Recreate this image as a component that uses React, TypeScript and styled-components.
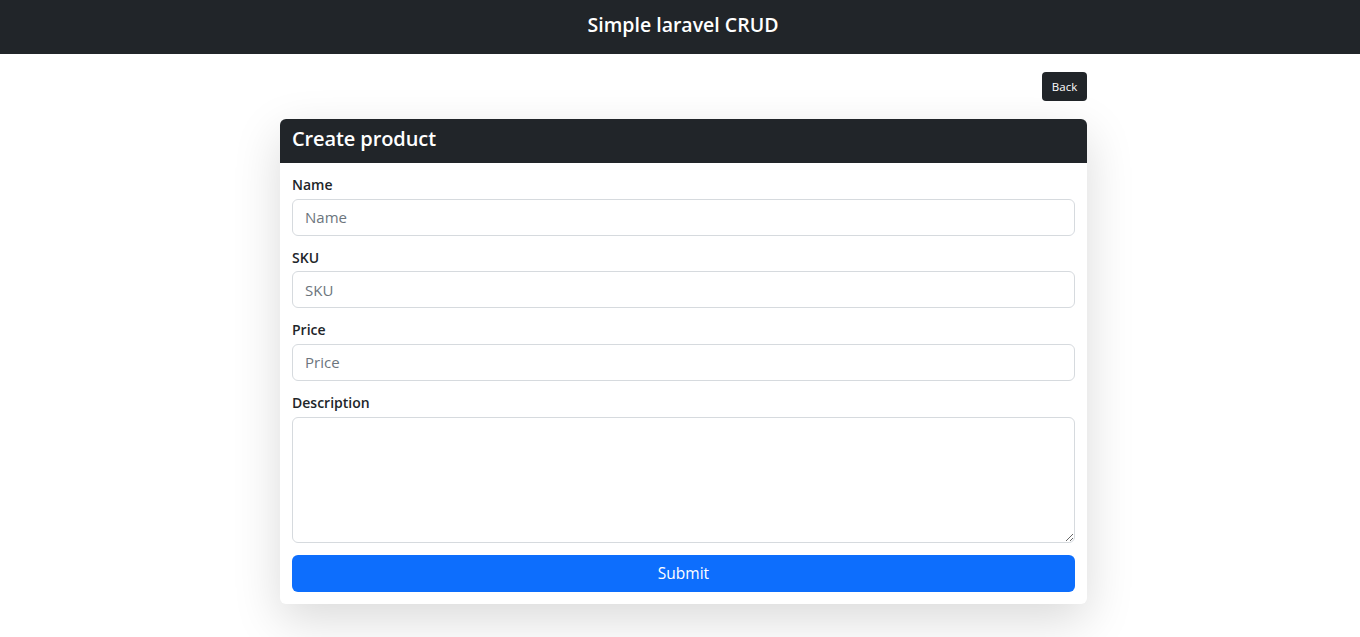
import React from "react";
import styled, { createGlobalStyle } from "styled-components";

const Global = createGlobalStyle`
  html, body { margin: 0; padding: 0; background: #fff; }
  body { font-family: "Open Sans", "Noto Sans", sans-serif; color: #212529; }
  * { box-sizing: border-box; }
`;

const NavBar = styled.header`
  height: 54px;
  background: #212529;
  display: flex;
  align-items: center;
  justify-content: center;
  padding-left: 6px;
  padding-bottom: 6px;
`;

const NavTitle = styled.h1`
  margin: 0;
  color: #fff;
  font-size: 19.5px;
  font-weight: 600;
  letter-spacing: 0px;
`;

const Main = styled.main`
  width: 807px;
  margin-left: calc(50% - 400px);
  padding: 18px 0 40px;
  display: flex;
  flex-direction: column;
`;

const TopRow = styled.div`
  display: flex;
  justify-content: flex-end;
  margin-bottom: 18px;
`;

const SmallButton = styled.button`
  height: 29px;
  width: 45px;
  border: none;
  border-radius: 4px;
  background: #212529;
  color: #fff;
  font-family: inherit;
  font-size: 11.5px;
  padding: 0;
`;

const Card = styled.section`
  border-radius: 6px;
  background: #fff;
  box-shadow: 0 16px 48px rgba(0, 0, 0, 0.15);
  overflow: hidden;
`;

const CardHeader = styled.div`
  height: 44px;
  background: #212529;
  display: flex;
  align-items: center;
  padding: 0 12px 5px;
`;

const CardTitle = styled.h2`
  margin: 0;
  color: #fff;
  font-size: 20px;
  font-weight: 600;
  letter-spacing: -0.1px;
`;

const CardBody = styled.form`
  padding: 12px;
  display: flex;
  flex-direction: column;
  gap: 12px;
`;

const Field = styled.div`
  display: flex;
  flex-direction: column;
`;

const Label = styled.label`
  font-size: 14px;
  font-weight: 600;
  line-height: 20px;
  margin-bottom: 3.67px;
  color: #212529;
`;

const Input = styled.input`
  height: 37px;
  width: 100%;
  border: 1px solid #d6dade;
  border-radius: 6px;
  padding: 0 12px;
  font-family: inherit;
  font-size: 15px;
  color: #212529;
  outline: none;
  &::placeholder { color: #6c757d; }
`;

const TextArea = styled.textarea`
  display: block;
  height: 126px;
  width: 100%;
  border: 1px solid #d6dade;
  border-radius: 6px;
  padding: 6px 12px;
  font-family: inherit;
  font-size: 15px;
  outline: none;
  resize: vertical;
`;

const SubmitButton = styled.button`
  height: 37px;
  width: 100%;
  border: none;
  border-radius: 6px;
  background: #0d6efd;
  color: #fff;
  font-family: inherit;
  font-size: 15.5px;
  padding-bottom: 2px;
`;

const fields = ["Name", "SKU", "Price"];

export default function App() {
  return (
    <>
      <Global />
      <NavBar>
        <NavTitle>Simple laravel CRUD</NavTitle>
      </NavBar>
      <Main>
        <TopRow>
          <SmallButton type="button">Back</SmallButton>
        </TopRow>
        <Card>
          <CardHeader>
            <CardTitle>Create product</CardTitle>
          </CardHeader>
          <CardBody onSubmit={(e) => e.preventDefault()}>
            {fields.map((f) => (
              <Field key={f}>
                <Label>{f}</Label>
                <Input placeholder={f} />
              </Field>
            ))}
            <Field>
              <Label>Description</Label>
              <TextArea />
            </Field>
            <SubmitButton type="submit">Submit</SubmitButton>
          </CardBody>
        </Card>
      </Main>
    </>
  );
}
